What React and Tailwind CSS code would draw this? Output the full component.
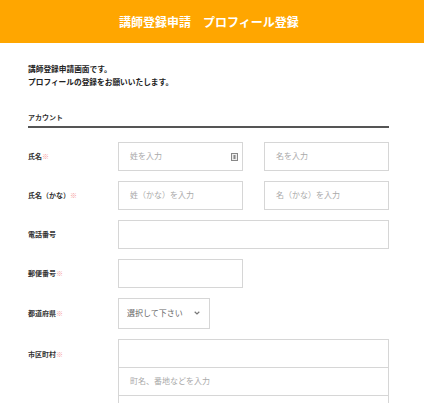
import React from 'react';

const FONT = { fontFamily: '"Noto Sans CJK JP", "Noto Sans", sans-serif' };

const Req = () => <span className="text-[#f59a9a]">※</span>;

function Label({ children, required }) {
  return (
    <div className="w-[90px] shrink-0 text-[7px] font-bold text-[#333]">
      {children}
      {required && <Req />}
    </div>
  );
}

function Field({ placeholder, className = '', icon }) {
  return (
    <div className={`relative h-[29px] border border-[#d6d6d6] bg-white flex items-center px-[11px] ${className}`}>
      <span className="text-[8px] text-[#aaa]">{placeholder}</span>
      {icon && (
        <svg className="absolute right-[4px] top-[10px]" width="7" height="8" viewBox="0 0 7 8">
          <rect x="0.5" y="0.5" width="6" height="7" fill="#eee" stroke="#888" />
          <rect x="2.5" y="2" width="2" height="4" fill="#888" />
        </svg>
      )}
    </div>
  );
}

export default function App() {
  return (
    <div className="w-[424px] h-[403px] overflow-hidden bg-white" style={FONT}>
      <header className="h-[43px] bg-[#ffa600] flex items-center justify-center">
        <h1 className="text-[12px] font-bold text-white pr-[6px]">講師登録申請　プロフィール登録</h1>
      </header>

      <div className="px-[28px] pt-[19px]">
        <div className="text-[7.7px] font-bold text-[#222] leading-[13px]">
          <p>講師登録申請画面です。</p>
          <p>プロフィールの登録をお願いいたします。</p>
        </div>

        <div className="mt-[24px] w-[361px] border-b-2 border-[#555] pb-[3px] text-[7px] font-bold text-[#333]">
          アカウント
        </div>

        <div className="mt-[14px] flex flex-col gap-[10px]">
          <div className="flex items-center">
            <Label required>氏名</Label>
            <div className="flex gap-[21px]">
              <Field placeholder="姓を入力" className="w-[125px]" icon />
              <Field placeholder="名を入力" className="w-[125px]" />
            </div>
          </div>

          <div className="flex items-center">
            <Label required>氏名（かな）</Label>
            <div className="flex gap-[21px]">
              <Field placeholder="姓（かな）を入力" className="w-[125px]" />
              <Field placeholder="名（かな）を入力" className="w-[125px]" />
            </div>
          </div>

          <div className="flex items-center">
            <Label>電話番号</Label>
            <Field placeholder="" className="w-[271px]" />
          </div>

          <div className="flex items-center">
            <Label required>郵便番号</Label>
            <Field placeholder="" className="w-[125px]" />
          </div>

          <div className="flex items-center">
            <Label required>都道府県</Label>
            <div className="w-[92px] h-[31px] border border-[#d6d6d6] flex items-center justify-between pl-[8px] pr-[9px]">
              <span className="text-[8px] text-[#666]">選択して下さい</span>
              <svg width="6" height="4" viewBox="0 0 6 4">
                <path d="M0.7 0.8 L3 3 L5.3 0.8" fill="none" stroke="#777" strokeWidth="1.2" />
              </svg>
            </div>
          </div>

          <div className="flex items-start">
            <div className="pt-[10px]">
              <Label required>市区町村</Label>
            </div>
            <div className="flex flex-col w-[271px]">
              <Field placeholder="" className="w-full" />
              <Field placeholder="町名、番地などを入力" className="w-full -mt-px" />
              <Field placeholder="" className="w-full -mt-px" />
            </div>
          </div>
        </div>
      </div>
    </div>
  );
}
